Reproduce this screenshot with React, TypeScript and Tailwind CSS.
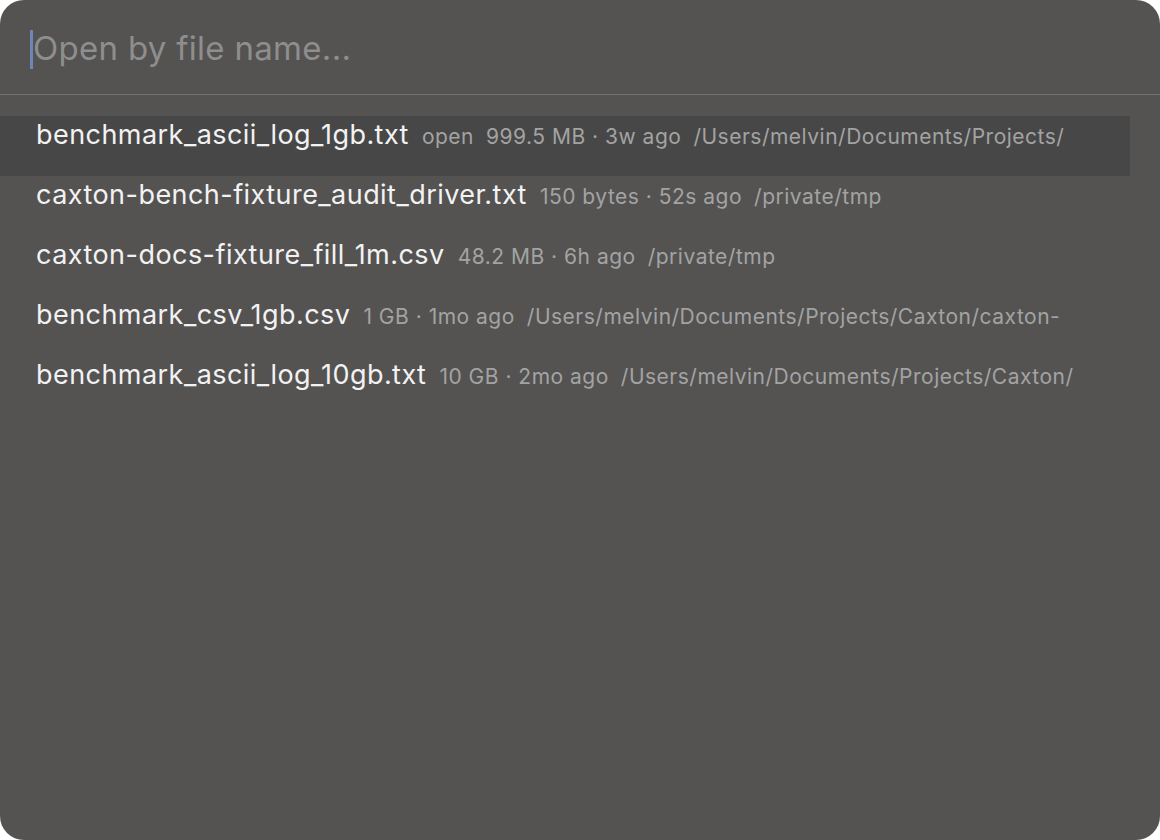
import React from "react";

type RecentFile = {
  name: string;
  meta: string;
  path: string;
  open?: boolean;
};

const files: RecentFile[] = [
  {
    name: "benchmark_ascii_log_1gb.txt",
    meta: "999.5 MB · 3w ago",
    path: "/Users/melvin/Documents/Projects/",
    open: true,
  },
  {
    name: "caxton-bench-fixture_audit_driver.txt",
    meta: "150 bytes · 52s ago",
    path: "/private/tmp",
  },
  {
    name: "caxton-docs-fixture_fill_1m.csv",
    meta: "48.2 MB · 6h ago",
    path: "/private/tmp",
  },
  {
    name: "benchmark_csv_1gb.csv",
    meta: "1 GB · 1mo ago",
    path: "/Users/melvin/Documents/Projects/Caxton/caxton-",
  },
  {
    name: "benchmark_ascii_log_10gb.txt",
    meta: "10 GB · 2mo ago",
    path: "/Users/melvin/Documents/Projects/Caxton/",
  },
];

function FileRow({ file, selected }: { file: RecentFile; selected: boolean }) {
  return (
    <div
      className={`flex h-[60px] w-[1130px] items-baseline overflow-hidden whitespace-nowrap pl-[36px] pt-px ${
        selected ? "bg-[#474747]" : ""
      }`}
    >
      <span className="text-[27px] leading-[36px] tracking-[0.45px] text-[#f2f2f2]">
        {file.name}
      </span>
      <span className="ml-[13px] flex gap-[12px] text-[21px] leading-[36px] tracking-[0.5px] text-[#a3a3a3]">
        {file.open && <span>open</span>}
        <span>{file.meta}</span>
        <span>{file.path}</span>
      </span>
    </div>
  );
}

export default function App() {
  const [query, setQuery] = React.useState("");

  return (
    <div className="h-[840px] w-[1160px] bg-white font-['Inter',_'Liberation_Sans',_sans-serif]">
      <div className="flex h-full w-full flex-col overflow-hidden rounded-[24px] bg-[#545352]">
        <div className="flex h-[94px] items-start pl-[30px] pt-[28px]">
          <span className="mt-[2px] h-[39px] w-[3px] shrink-0 bg-[#6d86b3]" />
          <input
            value={query}
            onChange={(e) => setQuery(e.target.value)}
            placeholder="Open by file name..."
            className="h-[40px] w-full bg-transparent text-[33px] leading-[40px] tracking-[0.3px] text-[#f2f2f2] outline-none placeholder:text-[#8e8e8e]"
          />
        </div>
        <div className="h-px bg-[#717070]" />
        <div className="flex flex-col pt-[21px]">
          {files.map((file, i) => (
            <FileRow key={file.name} file={file} selected={i === 0} />
          ))}
        </div>
      </div>
    </div>
  );
}
